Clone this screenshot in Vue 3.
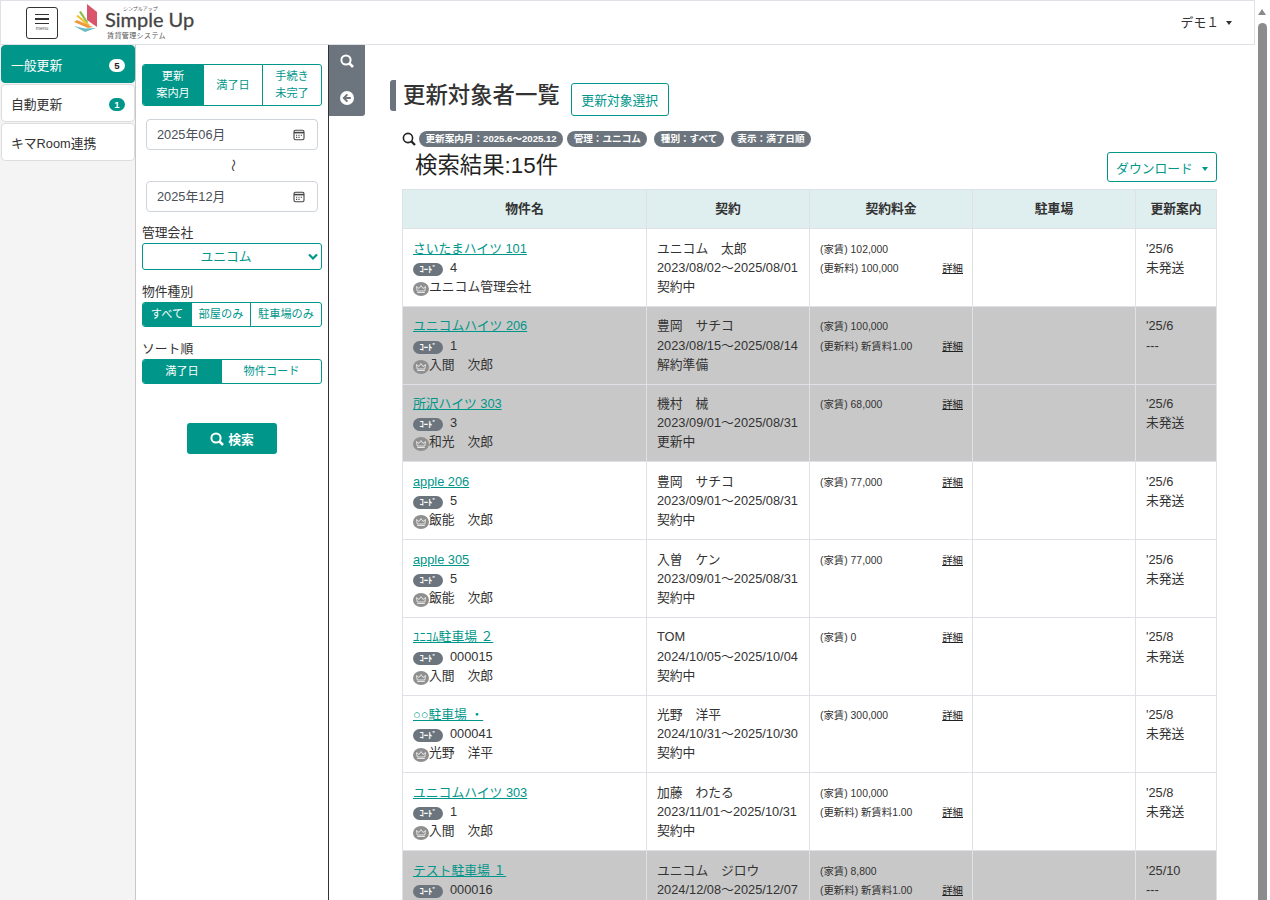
<script setup>
import { ref } from 'vue'

const tabs = [
  { label: '一般更新', count: 5, active: true },
  { label: '自動更新', count: 1 },
  { label: 'キマRoom連携' }
]

const condiciones = ['更新案内月：2025.6～2025.12', '管理：ユニコム', '種別：すべて', '表示：満了日順']

const company = ref('ユニコム')

const rows = [
  { name: 'さいたまハイツ 101', code: '4', owner: 'ユニコム管理会社', tenant: 'ユニコム　太郎', term: '2023/08/02～2025/08/01', status: '契約中', rent: '102,000', renewal: '100,000', month: "'25/6", sent: '未発送' },
  { name: 'ユニコムハイツ 206', code: '1', owner: '入間　次郎', tenant: '豊岡　サチコ', term: '2023/08/15～2025/08/14', status: '解約準備', rent: '100,000', renewal: '新賃料1.00', month: "'25/6", sent: '---', gray: true },
  { name: '所沢ハイツ 303', code: '3', owner: '和光　次郎', tenant: '機村　械', term: '2023/09/01～2025/08/31', status: '更新中', rent: '68,000', month: "'25/6", sent: '未発送', gray: true },
  { name: 'apple 206', code: '5', owner: '飯能　次郎', tenant: '豊岡　サチコ', term: '2023/09/01～2025/08/31', status: '契約中', rent: '77,000', month: "'25/6", sent: '未発送' },
  { name: 'apple 305', code: '5', owner: '飯能　次郎', tenant: '入曽　ケン', term: '2023/09/01～2025/08/31', status: '契約中', rent: '77,000', month: "'25/6", sent: '未発送' },
  { name: 'ﾕﾆｺﾑ駐車場 ２', code: '000015', owner: '入間　次郎', tenant: 'TOM', term: '2024/10/05～2025/10/04', status: '契約中', rent: '0', month: "'25/8", sent: '未発送' },
  { name: '○○駐車場 ・', code: '000041', owner: '光野　洋平', tenant: '光野　洋平', term: '2024/10/31～2025/10/30', status: '契約中', rent: '300,000', month: "'25/8", sent: '未発送' },
  { name: 'ユニコムハイツ 303', code: '1', owner: '入間　次郎', tenant: '加藤　わたる', term: '2023/11/01～2025/10/31', status: '契約中', rent: '100,000', renewal: '新賃料1.00', month: "'25/8", sent: '未発送' },
  { name: 'テスト駐車場 １', code: '000016', owner: '入間　次郎', tenant: 'ユニコム　ジロウ', term: '2024/12/08～2025/12/07', status: '契約中', rent: '8,800', renewal: '新賃料1.00', month: "'25/10", sent: '---', gray: true }
]
</script>

<template>
  <div class="pantalla">
    <header class="cabecera">
      <button class="menu-btn">
        <span class="menu-lineas"><i></i><i></i><i></i></span>
        <span class="menu-txt">menu</span>
      </button>
      <div class="logo">
        <svg class="logo-icono" width="25" height="31" viewBox="0 0 25 31">
          <path d="M14 2 L24 10 L24 25 L14 18 Z" fill="#d9556b" />
          <path d="M6 10 L8 9 L15 20 L14 22 Z" fill="#8bbf4a" />
          <path d="M3 14 L5 13 L17 23 L15 24 Z" fill="#f2c230" />
          <path d="M1 20 L4 18 L20 25 L15 26 Z" fill="#f09a3e" />
          <path d="M1 24 L12 26.5 L23 26 L12 30 Z" fill="#68bcc8" />
        </svg>
        <div class="logo-textos">
          <span class="logo-mini">シンプルアップ</span>
          <span class="logo-nombre">Simple Up</span>
          <span class="logo-sub">賃貸管理システム</span>
        </div>
      </div>
      <div class="usuario">デモ１<i class="caret"></i></div>
    </header>

    <div class="cuerpo">
      <nav class="tabs">
        <a v-for="t in tabs" :key="t.label" class="tab" :class="{ activo: t.active }">
          {{ t.label }}
          <span v-if="t.count" class="contador">{{ t.count }}</span>
        </a>
      </nav>

      <aside class="filtros">
        <div class="grupo grupo-alto">
          <span class="op on" style="width: 60px">更新<br />案内月</span>
          <span class="op" style="width: 59px">満了日</span>
          <span class="op" style="width: 59px">手続き<br />未完了</span>
        </div>

        <div class="fecha">
          2025年06月
          <svg width="12" height="12" viewBox="0 0 12 12" fill="none" stroke="#444" stroke-width="1.1">
            <rect x="1" y="1.2" width="10" height="9.6" rx="1.5" />
            <path d="M1 3.6h10" stroke-width="1.6" />
            <path d="M3 6.2h1.2M5.4 6.2h1.2M7.8 6.2h1.2M3 8.4h1.2M5.4 8.4h1.2" />
          </svg>
        </div>
        <div class="entre"><span>～</span></div>
        <div class="fecha">
          2025年12月
          <svg width="12" height="12" viewBox="0 0 12 12" fill="none" stroke="#444" stroke-width="1.1">
            <rect x="1" y="1.2" width="10" height="9.6" rx="1.5" />
            <path d="M1 3.6h10" stroke-width="1.6" />
            <path d="M3 6.2h1.2M5.4 6.2h1.2M7.8 6.2h1.2M3 8.4h1.2M5.4 8.4h1.2" />
          </svg>
        </div>

        <label class="etiqueta et-primera">管理会社</label>
        <div class="selector">
          <select v-model="company">
            <option>ユニコム</option>
          </select>
          <svg width="10" height="8" viewBox="0 0 10 8" fill="none" stroke="#00968a" stroke-width="2.2">
            <path d="M1 1.5 L5 5.5 L9 1.5" />
          </svg>
        </div>

        <label class="etiqueta">物件種別</label>
        <div class="grupo">
          <span class="op on" style="width: 48px">すべて</span>
          <span class="op" style="width: 59px">部屋のみ</span>
          <span class="op" style="width: 71px">駐車場のみ</span>
        </div>

        <label class="etiqueta">ソート順</label>
        <div class="grupo">
          <span class="op on" style="width: 78px">満了日</span>
          <span class="op" style="width: 100px">物件コード</span>
        </div>

        <button class="buscar">
          <svg width="14" height="14" viewBox="0 0 14 14" fill="none" stroke="#fff" stroke-width="2">
            <circle cx="6" cy="6" r="4.6" />
            <path d="M9.4 9.4 L13 13" stroke-width="2.6" />
          </svg>
          検索
        </button>
      </aside>

      <div class="plegar">
        <div class="plegar-caja">
          <svg width="14" height="14" viewBox="0 0 14 14" fill="none" stroke="#fff" stroke-width="2">
            <circle cx="6" cy="6" r="4.6" />
            <path d="M9.4 9.4 L13 13" stroke-width="2.6" />
          </svg>
          <svg width="14" height="14" viewBox="0 0 14 14">
            <circle cx="7" cy="7" r="7" fill="#fff" />
            <path d="M7.4 3.4 L3.8 7 L7.4 10.6 M4.2 7 H10.8" fill="none" stroke="#6c757d" stroke-width="1.9" />
          </svg>
        </div>
      </div>

      <main class="contenido">
        <div class="titulo-fila">
          <h1 class="titulo">更新対象者一覧</h1>
          <button class="btn-borde btn-select">更新対象選択</button>
        </div>

        <section class="resultados">
          <div class="cond-fila">
            <svg width="14" height="14" viewBox="0 0 14 14" fill="none" stroke="#222" stroke-width="1.6">
              <circle cx="6" cy="6" r="4.6" />
              <path d="M9.4 9.4 L13 13" stroke-width="2.2" />
            </svg>
            <span v-for="c in condiciones" :key="c" class="pildora">{{ c }}</span>
          </div>

          <div class="res-fila">
            <h2 class="res-titulo">検索結果:15件</h2>
            <button class="btn-borde btn-descarga">ダウンロード<i class="caret"></i></button>
          </div>

          <table class="tabla">
            <colgroup>
              <col style="width: 244px" />
              <col style="width: 163px" />
              <col style="width: 163px" />
              <col style="width: 163px" />
              <col style="width: 81px" />
            </colgroup>
            <thead>
              <tr>
                <th>物件名</th>
                <th>契約</th>
                <th>契約料金</th>
                <th>駐車場</th>
                <th>更新案内</th>
              </tr>
            </thead>
            <tbody>
              <tr v-for="r in rows" :key="r.name" :class="{ gris: r.gray }">
                <td>
                  <a class="enlace linea">{{ r.name }}</a>
                  <div class="linea"><span class="cod">ｺｰﾄﾞ</span>{{ r.code }}</div>
                  <div class="linea dueno"><svg width="16" height="14" viewBox="0 0 16 14">
                      <ellipse cx="8" cy="7" rx="8" ry="7" fill="#8f8f8f" />
                      <path d="M3.5 4.5 L6 6.5 L8 3.5 L10 6.5 L12.5 4.5 L11.8 9 H4.2 Z M4.2 10.5 H11.8" fill="none" stroke="#e4e4e4" stroke-width="1" />
                    </svg>{{ r.owner }}</div>
                </td>
                <td>
                  <div class="linea">{{ r.tenant }}</div>
                  <div class="linea">{{ r.term }}</div>
                  <div class="linea">{{ r.status }}</div>
                </td>
                <td class="cuota">
                  <div class="linea cuota-l"><span>(家賃) {{ r.rent }}</span><a v-if="!r.renewal" class="detalle">詳細</a></div>
                  <div v-if="r.renewal" class="linea cuota-l"><span>(更新料) {{ r.renewal }}</span><a class="detalle">詳細</a></div>
                </td>
                <td></td>
                <td>
                  <div class="linea">{{ r.month }}</div>
                  <div class="linea">{{ r.sent }}</div>
                </td>
              </tr>
            </tbody>
          </table>
        </section>
      </main>
    </div>

    <div class="barra">
      <i class="barra-flecha"></i>
      <i class="barra-pulgar"></i>
    </div>
  </div>
</template>

<style>
html, body {
  overflow: hidden;
  background: #fff;
}
</style>

<style scoped>
.pantalla {
  position: relative;
  width: 1270px;
  height: 900px;
  overflow: hidden;
  font-family: "Liberation Sans", "Noto Sans CJK JP", sans-serif;
  font-size: 12.8px;
  line-height: 1.5;
  color: #333;
  background: #fff;
}

.cabecera {
  display: flex;
  align-items: center;
  width: 1255px;
  height: 45px;
  box-sizing: border-box;
  border: 1px solid #dee2e6;
  padding-left: 25px;
  background: #fff;
}

.menu-btn {
  display: flex;
  flex-direction: column;
  align-items: center;
  justify-content: center;
  width: 32px;
  height: 32px;
  padding: 0;
  border: 1px solid #333;
  border-radius: 3px;
  background: #fff;
}

.menu-lineas {
  display: flex;
  flex-direction: column;
  gap: 3px;
}

.menu-lineas i {
  display: block;
  width: 14px;
  height: 1.5px;
  background: #333;
}

.menu-txt {
  font-size: 5px;
  line-height: 6px;
  margin-top: 1px;
  color: #555;
}

.logo {
  display: flex;
  align-items: flex-start;
  margin-left: 15px;
  height: 43px;
}

.logo-icono {
  margin-top: 1px;
}

.logo-textos {
  display: flex;
  flex-direction: column;
  margin-left: 7px;
  margin-top: 5px;
}

.logo-mini {
  font-size: 5px;
  line-height: 5px;
  margin-left: 18px;
  color: #555;
}

.logo-nombre {
  font-family: "Lato", sans-serif;
  font-size: 20px;
  line-height: 16px;
  color: #444;
  -webkit-text-stroke: 0.3px #444;
}

.logo-sub {
  font-size: 7px;
  line-height: 9px;
  margin-left: 2px;
  margin-top: 4px;
  letter-spacing: 0.4px;
  color: #555;
}

.usuario {
  margin-left: auto;
  margin-right: 22px;
  color: #333;
}

.caret {
  display: inline-block;
  margin-left: 7px;
  vertical-align: 2px;
  border-top: 4px solid currentColor;
  border-left: 3.5px solid transparent;
  border-right: 3.5px solid transparent;
}

.cuerpo {
  display: flex;
  width: 1255px;
  height: 855px;
}

.tabs {
  flex: none;
  display: flex;
  flex-direction: column;
  gap: 1px;
  width: 136px;
  box-sizing: border-box;
  padding-left: 1px;
  background: #f4f4f4;
  border-right: 1px solid #c8c8c8;
}

.tab {
  display: flex;
  align-items: center;
  justify-content: space-between;
  height: 38px;
  box-sizing: border-box;
  padding: 3px 9px 0;
  background: #fff;
  border: 1px solid #ddd;
  border-radius: 4px;
  color: #333;
}

.tab.activo {
  background: #00968a;
  border-color: #00968a;
  color: #fff;
}

.contador {
  width: 16px;
  height: 13px;
  border-radius: 7px;
  background: #00968a;
  color: #fff;
  font-size: 9.6px;
  font-weight: 700;
  line-height: 13px;
  text-align: center;
}

.tab.activo .contador {
  background: #fff;
  color: #222;
}

.filtros {
  flex: none;
  display: flex;
  flex-direction: column;
  width: 193px;
  box-sizing: border-box;
  padding: 19px 6px 0;
  border-right: 1px solid #333;
}

.grupo {
  display: flex;
  width: 180px;
  height: 25px;
  box-sizing: border-box;
  border: 1px solid #00968a;
  border-radius: 3px;
  overflow: hidden;
}

.grupo-alto {
  height: 42px;
  margin-bottom: 13px;
}

.op {
  display: flex;
  align-items: center;
  justify-content: center;
  box-sizing: border-box;
  text-align: center;
  font-size: 11.2px;
  line-height: 17px;
  color: #00968a;
  border-left: 1px solid #00968a;
}

.op:first-child {
  border-left: none;
}

.op.on {
  background: #00968a;
  color: #fff;
}

.fecha {
  display: flex;
  align-items: center;
  justify-content: space-between;
  height: 31px;
  box-sizing: border-box;
  margin: 0 4px;
  padding: 0 12px 0 10px;
  border: 1px solid #ced4da;
  border-radius: 4px;
  color: #495057;
}

.entre {
  height: 31px;
  display: flex;
  align-items: center;
  justify-content: center;
}

.entre span {
  display: block;
  transform: rotate(90deg);
  font-size: 12.8px;
  line-height: 1;
}

.etiqueta {
  height: 20px;
  margin-top: 12px;
  line-height: 19px;
  color: #333;
}

.et-primera {
  margin-top: 11px;
}

.selector {
  position: relative;
  height: 27px;
}

.selector select {
  appearance: none;
  display: block;
  width: 180px;
  height: 27px;
  padding: 0 12px 0 0;
  border: 1px solid #00968a;
  border-radius: 3px;
  background: #fff;
  color: #00968a;
  font: inherit;
  text-align: center;
}

.selector svg {
  position: absolute;
  right: 4px;
  top: 10px;
  pointer-events: none;
}

.buscar {
  display: flex;
  align-items: center;
  justify-content: center;
  gap: 4px;
  width: 90px;
  height: 31px;
  margin: 39px 0 0 45px;
  border: none;
  border-radius: 3px;
  background: #00968a;
  color: #fff;
  font-family: inherit;
  font-size: 12.8px;
  font-weight: 700;
}

.plegar {
  flex: none;
  width: 37px;
}

.plegar-caja {
  display: flex;
  flex-direction: column;
  align-items: center;
  gap: 23px;
  width: 36px;
  height: 71px;
  box-sizing: border-box;
  padding-top: 9px;
  background: #6c757d;
  border-radius: 0 0 3px 0;
}

.contenido {
  flex: 1;
  min-width: 0;
  padding: 35px 38px 0 24px;
}

.titulo-fila {
  display: flex;
  align-items: flex-start;
  height: 36px;
}

.titulo {
  margin: 0;
  height: 31px;
  padding-left: 7px;
  border-left: 6px solid #6c757d;
  border-radius: 3px 0 0 3px;
  font-size: 22.4px;
  font-weight: 500;
  line-height: 32px;
  color: #333;
}

.btn-borde {
  box-sizing: border-box;
  padding: 0;
  border: 1px solid #00968a;
  border-radius: 3px;
  background: #fff;
  color: #00968a;
  font-family: inherit;
  font-size: 12.8px;
}

.btn-select {
  width: 98px;
  height: 33px;
  margin: 3px 0 0 11px;
}

.btn-descarga .caret {
  margin-left: 9px;
}

.resultados {
  padding-left: 12px;
}

.cond-fila {
  display: flex;
  align-items: center;
  height: 18px;
  margin-top: 14px;
}

.pildora {
  margin-left: 3px;
  height: 16px;
  padding: 0 6.5px;
  border-radius: 8px;
  background: #6c757d;
  color: #fff;
  font-size: 9.6px;
  font-weight: 700;
  line-height: 16px;
  white-space: nowrap;
}

.pildora:nth-of-type(2) {
  margin-left: 4px;
}

.pildora:nth-of-type(n + 3) {
  margin-left: 7px;
}

.res-fila {
  display: flex;
  align-items: center;
  justify-content: space-between;
  height: 30px;
  margin-top: 4px;
  padding-left: 13px;
}

.res-titulo {
  margin: -2px 0 0;
  font-size: 22.4px;
  font-weight: 400;
  line-height: 30px;
  color: #222;
}

.btn-descarga {
  width: 110px;
  height: 30px;
}

.tabla {
  width: 814px;
  margin-top: 7px;
  border-collapse: collapse;
  table-layout: fixed;
}

.tabla th,
.tabla td {
  border: 1px solid #dee2e6;
  box-sizing: border-box;
}

.tabla th {
  height: 39px;
  padding: 0;
  background: #dfeeee;
  font-weight: 700;
  font-size: 12.8px;
  color: #333;
  text-align: center;
}

.tabla td {
  padding: 9.6px 10px;
  vertical-align: top;
  white-space: nowrap;
}

.tabla td.cuota {
  padding: 10.6px 9px 0 10px;
  font-size: 10.4px;
}

.linea {
  height: 19.2px;
  line-height: 19.2px;
}

.gris td {
  background: #c8c8c8;
}

.enlace {
  color: #00968a;
  text-decoration: underline;
  display: block;
}

.cod {
  display: inline-block;
  width: 30px;
  height: 13px;
  margin-right: 7px;
  border-radius: 7px;
  background: #6c757d;
  color: #fff;
  font-size: 8.5px;
  font-weight: 700;
  line-height: 13px;
  text-align: center;
  vertical-align: 0;
}

.dueno svg {
  vertical-align: -5px;
}

.cuota-l {
  display: flex;
  justify-content: space-between;
  align-items: center;
}

.detalle {
  color: #222;
  text-decoration: underline;
}

.barra {
  position: absolute;
  top: 0;
  right: 0;
  width: 15px;
  height: 900px;
  background: #fff;
}

.barra-flecha {
  position: absolute;
  top: 9px;
  left: 3px;
  border-bottom: 6px solid #8a8a8a;
  border-left: 4.5px solid transparent;
  border-right: 4.5px solid transparent;
}

.barra-pulgar {
  position: absolute;
  top: 23px;
  left: 3px;
  width: 9px;
  height: 877px;
  border-radius: 5px 5px 0 0;
  background: #8c8c8c;
}
</style>
